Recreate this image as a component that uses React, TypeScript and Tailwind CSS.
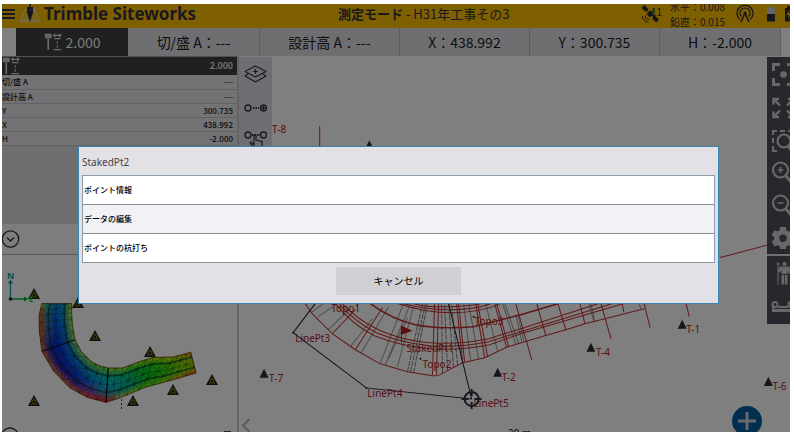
import React from "react";

type Pt = [number, number];
type RGB = [number, number, number];

const CJK = "font-['Noto_Sans_CJK_JP',sans-serif]";

/* ---------- Header icons ---------- */

function LogoIcon() {
  return (
    <svg viewBox="0 0 22 20" className="h-5 w-[22px] shrink-0" fill="none" aria-hidden="true">
      <path d="M7.500 4 1.500 17H20.500L14.500 4" stroke="#ddd8c8" strokeWidth="1.400" />
      <path d="M6.500 16 11 8l4.500 8" stroke="#ddd8c8" strokeWidth="1" />
      <path d="M11 0v3" stroke="#2a2a3c" strokeWidth="1.500" />
      <path d="M8 3h6v5.500L11 18 8 8.500z" fill="#2a2a3c" />
      <path d="M8 6h6" stroke="#5a5a78" strokeWidth="1" />
    </svg>
  );
}

function SatelliteIcon() {
  return (
    <svg viewBox="0 0 18 18" className="h-[18px] w-[18px] shrink-0" fill="none" aria-hidden="true">
      <g fill="#2c2a38">
        <rect x="1" y="1.500" width="6" height="4" transform="rotate(45 4 3.500)" />
        <rect x="6.500" y="6.500" width="5" height="5" transform="rotate(45 9 9)" />
        <rect x="11.500" y="12" width="6" height="4" transform="rotate(45 14.500 14)" />
      </g>
      <path d="m4 4 10 9" stroke="#2c2a38" strokeWidth="1" />
      <path d="m10.500 7.500 2-2" stroke="#2c2a38" strokeWidth="1.600" />
      <path d="M4 10.500a4 4 0 0 0 4 4M1.500 11a6 6 0 0 0 6 6" stroke="#2c2a38" strokeWidth="1" />
    </svg>
  );
}

function AntennaIcon() {
  return (
    <svg viewBox="0 0 18 18" className="h-[18px] w-[18px] shrink-0" fill="none" stroke="#2c2a38" aria-hidden="true">
      <path d="M4 14.500a8 8 0 1 1 10 0" strokeWidth="1.300" />
      <path d="M5.300 11.500a5 5 0 1 1 7.400 0" strokeWidth="1.300" />
      <path d="M5 17 9 8l4 9" strokeWidth="1.500" />
      <circle cx="9" cy="8.300" r="1.500" fill="#2c2a38" stroke="none" />
    </svg>
  );
}

function BatteryIcon() {
  return (
    <svg viewBox="0 0 10 18" className="h-[18px] w-[10px] shrink-0" aria-hidden="true">
      <path d="M3 1h4v2h2v6H1V3h2z" fill="#d0ccc8" />
      <path d="M1 9h8v7.500H1z" fill="#2c2a38" />
    </svg>
  );
}

function ChargeIcon() {
  return (
    <svg viewBox="0 0 10 18" className="h-[18px] w-[10px] shrink-0" aria-hidden="true">
      <path d="M3 1h4v2h2.500v13.500H1V3h2z" fill="#2c2a38" />
      <path d="M5.500 5 2.300 10h2.500L4 14l3.500-5.500H5z" fill="#ffc000" />
    </svg>
  );
}

function HeightIcon() {
  return (
    <svg viewBox="0 0 18 19" className="h-[18px] w-[18px] shrink-0" fill="none" stroke="#d8d8d8" aria-hidden="true">
      <path d="M1 1.500h6v3.500H1z" strokeWidth="1.200" />
      <path d="M1 3.300h6M4 5.500V18" strokeWidth="1.700" />
      <path d="M9.500 2.500h8M11.500 1 9.500 2.500l2 1.500M15.500 1l2 1.500-2 1.500M10 6h7M13.500 8.500v2.500M13.500 13v2.500M9.500 17.500h8" strokeWidth="1.200" />
    </svg>
  );
}

/* ---------- Terrain model in the overview map ---------- */

const OUTER: Pt[] = [
  [125, 47], [118, 80], [118, 130], [126, 190], [160, 248], [210, 300], [262, 328],
  [318, 343], [358, 330], [400, 313], [435, 298], [480, 286], [530, 272], [588, 255],
];
const INNER: Pt[] = [
  [215, 47], [215, 75], [217, 110], [225, 155], [243, 190], [275, 222], [300, 234],
  [325, 240], [368, 240], [415, 222], [460, 208], [520, 207], [545, 200], [572, 193],
];
const HEIGHTS: RGB[][] = [
  [[170, 230, 30], [10, 190, 190], [0, 120, 220], [0, 170, 200], [190, 235, 30]],
  [[240, 80, 20], [40, 150, 170], [0, 100, 225], [0, 150, 220], [180, 235, 30]],
  [[240, 70, 10], [50, 120, 170], [0, 60, 225], [0, 130, 230], [170, 230, 40]],
  [[220, 110, 40], [20, 30, 210], [0, 40, 225], [0, 110, 230], [140, 230, 60]],
  [[220, 120, 40], [20, 10, 200], [0, 60, 225], [0, 120, 220], [120, 230, 70]],
  [[225, 100, 50], [40, 20, 200], [0, 80, 230], [0, 150, 210], [120, 235, 50]],
  [[240, 60, 50], [100, 70, 200], [0, 130, 230], [0, 180, 190], [110, 235, 40]],
  [[255, 0, 0], [60, 160, 190], [0, 190, 210], [0, 200, 180], [150, 235, 30]],
  [[220, 190, 70], [0, 190, 180], [0, 190, 190], [0, 200, 130], [130, 235, 30]],
  [[150, 230, 40], [0, 200, 110], [0, 200, 90], [0, 210, 50], [140, 235, 10]],
  [[110, 230, 10], [10, 220, 20], [0, 210, 20], [20, 220, 10], [180, 230, 0]],
  [[150, 230, 10], [60, 220, 10], [50, 220, 10], [90, 225, 0], [190, 220, 0]],
  [[220, 150, 20], [130, 230, 0], [120, 225, 0], [150, 225, 0], [200, 200, 0]],
  [[255, 50, 20], [170, 225, 0], [150, 220, 0], [180, 220, 0], [230, 130, 0]],
];

const mix = (a: number, b: number, t: number) => a + (b - a) * t;

function along(line: Pt[], s: number): Pt {
  const i = Math.min(Math.floor(s), line.length - 2);
  return [mix(line[i][0], line[i + 1][0], s - i), mix(line[i][1], line[i + 1][1], s - i)];
}

function at(s: number, t: number): Pt {
  const o = along(OUTER, s);
  const n = along(INNER, s);
  return [mix(o[0], n[0], t) / 3, mix(o[1], n[1], t) / 3 + 287];
}

function shade(s: number, t: number): string {
  const i = Math.min(Math.floor(s), 12);
  const j = Math.min(Math.floor(t * 4), 3);
  const u = s - i;
  const v = t * 4 - j;
  const c = [0, 1, 2].map((k) =>
    Math.round(
      mix(mix(HEIGHTS[i][j][k], HEIGHTS[i][j + 1][k], v), mix(HEIGHTS[i + 1][j][k], HEIGHTS[i + 1][j + 1][k], v), u)
    )
  );
  return `rgb(${c.join(",")})`;
}

const pts = (list: Pt[]) => list.map((p) => `${p[0].toFixed(1)},${p[1].toFixed(1)}`).join(" ");

function Terrain() {
  const cells: React.ReactNode[] = [];
  const S = 52;
  const T = 12;
  for (let i = 0; i < S; i++) {
    for (let j = 0; j < T; j++) {
      const s0 = (i / S) * 13;
      const s1 = ((i + 1) / S) * 13;
      const color = shade((s0 + s1) / 2, (j + 0.5) / T);
      cells.push(
        <polygon
          key={`${i}-${j}`}
          points={pts([at(s0, j / T), at(s1, j / T), at(s1, (j + 1) / T), at(s0, (j + 1) / T)])}
          fill={color}
          stroke={color}
          strokeWidth="0.5"
        />
      );
    }
  }
  const long = (t: number) => pts(Array.from({ length: 53 }, (_, i) => at(i / 4, t)));
  const mesh: React.ReactNode[] = [];
  for (let i = 0; i <= 26; i++) {
    mesh.push(<polyline key={`c${i}`} points={pts([at(i / 2, 0), at(i / 2, 1)])} />);
    if (i < 26) {
      const a = i / 2;
      const b = (i + 1) / 2;
      mesh.push(
        <polyline key={`z${i}`} points={pts(i % 2 ? [at(a, 0), at(b, 0.3), at(a, 0.5), at(b, 0.75), at(a, 1)] : [at(b, 0), at(a, 0.3), at(b, 0.5), at(a, 0.75), at(b, 1)])} />
      );
    }
  }
  return (
    <g fill="none">
      {cells}
      <g stroke="#102018" strokeOpacity="0.6" strokeWidth="0.6">
        {mesh}
        <polyline points={long(0.5)} />
      </g>
      <g stroke="#003028" strokeOpacity="0.6" strokeWidth="2">
        <polyline points={long(0.28)} />
        <polyline points={long(0.77)} />
      </g>
      <g stroke="#101010" strokeWidth="1.2">
        <polyline points={pts([at(3, 0), at(3, 1)])} />
        <polyline points={pts([at(7, 0), at(7, 1)])} />
      </g>
      <g stroke="#503018" strokeWidth="0.7">
        <polyline points={long(0)} />
        <polyline points={long(1)} />
        <polyline points={pts([at(0, 0), at(0, 1)])} />
        <polyline points={pts([at(13, 0), at(13, 1)])} />
      </g>
    </g>
  );
}

const CONTROL_POINTS: Pt[] = [
  [34, 293], [78, 302], [95, 335], [150, 351], [212, 379], [173, 389], [133, 400], [34, 400],
];

function OverviewMap() {
  return (
    <svg viewBox="2 254 235 178" preserveAspectRatio="xMinYMin slice" className="absolute inset-0 size-full" aria-label="全体図">
      <Terrain />
      {CONTROL_POINTS.map(([x, y]) => (
        <g key={`${x}-${y}`}>
          <path d={`M${x} ${y - 6}l6 11h-12z`} fill="#1c1a20" />
          <circle cx={x} cy={y + 1} r="2" fill="none" stroke="#a89000" strokeWidth="1" />
          <path d={`M${x} ${y - 3}v1.500M${x - 3} ${y + 4}l1-1M${x + 3} ${y + 4}l-1-1`} stroke="#a89000" />
        </g>
      ))}
      <path d="M10.500 298v-17" stroke="#009898" strokeWidth="1.200" />
      <path d="M10.500 278.500l2.500 4h-5z" fill="#009898" />
      <path d="M10 298h15" stroke="#00b428" strokeWidth="1.400" />
      <path d="M24 295.500l4 2.500-4 2.500z" fill="#00b428" />
      <circle cx="10.500" cy="298" r="1.800" fill="#402020" />
      <text x="7" y="278" fill="#00a8a8" fontWeight="700" className="font-['Noto_Sans',sans-serif] text-[9px]">N</text>
      <text x="29" y="301" fill="#00b428" fontWeight="700" className="font-['Noto_Sans',sans-serif] text-[8px]">E</text>
      <path d="M121.500 398v10" stroke="#b02030" strokeDasharray="2 2" />
      <circle cx="10" cy="435.500" r="8.500" fill="none" stroke="#34323f" strokeWidth="1.300" />
      <text x="216" y="437" fill="#34323f" fontWeight="700" className="font-['Noto_Sans',sans-serif] text-[9px]">K</text>
      <path d="M224 430h7v2h-7z" fill="#4a4856" />
    </svg>
  );
}

/* ---------- Main plan map ---------- */

const RED_RADIALS = [
  "M332 334 355 310", "M355 350 382 308", "M432 375 434 304", "M436 375 438 304",
  "M462 363 456 304", "M464 362 458 304", "M484 358 475 304", "M487 357 477 304",
  "M506 348 494 304", "M508 347 496 304", "M515 304 531 360", "M536 304 545 336",
  "M557 304 565 330", "M579 304 584 324", "M600 304 610 339", "M621 304 623 313",
  "M643 304 649 328", "M685 304 688 317", "M319.500 127V147",
];
const GREY_RADIALS = [
  "M318 317 337 304", "M311 313 323 304", "M328 330 350 309", "M350 347 372 319", "M361 353 388 307",
  "M380 363 403 304", "M385 365 410 304", "M397 367 413 307", "M515 315 521 342", "M517 315 523 341",
  "M588 304 593 322", "M590 304 594 322", "M638 304 640 309", "M470 361 463 304", "M478 359 468 304",
  "M497 352 485 304", "M515 345 502 304", "M518 344 504 304", "M388 359 407 318",
];
const DARK_RADIALS = [
  "M407 372 422 304", "M410 372 425 304", "M413 373 427 304", "M442 373 441 304",
  "M447 370 444 304", "M453 368 448 304", "M457 365 451 304",
];

const LABELS: [number, number, string][] = [
  [272, 134, "T-8"], [331, 312, "Topo1"], [295, 342, "LinePt3"], [269, 382, "T-7"],
  [367, 397, "LinePt4"], [406, 352, "StakedPt1"], [422, 368, "Topo2"], [474, 325, "Topo3"],
  [501, 381, "T-2"], [473, 407, "LinePt5"], [595, 356, "T-4"], [685, 333, "T-1"], [771, 390, "T-6"],
];
const TRIANGLES: Pt[] = [[264, 374], [497, 373], [590, 348], [681, 325], [767, 382], [369, 146], [771, 135]];

function PlanMap() {
  return (
    <svg viewBox="239 57 551 375" preserveAspectRatio="xMinYMin slice" className="absolute inset-0 size-full" fill="none" aria-label="平面図">
      <g stroke="#989898" strokeWidth="1">
        {GREY_RADIALS.map((d) => <path key={d} d={d} />)}
      </g>
      <g stroke="#808080" strokeWidth="1" strokeDasharray="5 1">
        {DARK_RADIALS.map((d) => <path key={d} d={d} />)}
      </g>
      <g stroke="#c43030" strokeWidth="1">
        {RED_RADIALS.map((d) => <path key={d} d={d} />)}
        <path d="M305 304 312 314 332 334 355 350 380 364 407 372 432 376 437 376 462 363 484 358 507 347 514 345 544 336 565 330 584 324 604 319 643 309" />
        <path d="M342 304Q357 320 378 330 402 341 430 343 458 345 488 339L520 329 597 304" />
        <path d="M339 304Q354 322 376 333 401 343 429 346 458 348 488 342L520 332 611 304" />
        <path d="M335 304Q352 325 374 336 400 346 428 349 458 351 489 345L520 334 622 304" />
        <path d="M370 304Q392 320 415 325 440 330 473 327L520 315 557 304" strokeWidth="1.500" />
        <path d="M403 304Q427 310 450 310T490 304M398 304Q425 313 452 313T500 304M413 304Q430 308 450 307T480 304" />
        <path d="M719 258 768 245" />
      </g>
      <path d="M315 304 293 333 366 388 471 399 448 304" stroke="#202020" strokeWidth="1" />
      <path d="M401 326v17" stroke="#7a4a4a" />
      <path d="M401 326l11 5-11 4z" fill="#c01a1a" />
      {TRIANGLES.map(([x, y]) => (
        <path key={`${x}-${y}`} d={`M${x} ${y - 5}l4.500 9h-9z`} fill="#2e2c38" />
      ))}
      <g fill="#202020">
        <circle cx="293" cy="333" r="1" />
        <circle cx="366" cy="388" r="1" />
        <circle cx="420" cy="359" r="1" />
        <circle cx="473" cy="317" r="1" />
      </g>
      <g fill="#b01c1c" className="font-['Noto_Sans',sans-serif] text-[10px]">
        {LABELS.map(([x, y, label]) => <text key={label} x={x} y={y}>{label}</text>)}
      </g>
      <circle cx="471" cy="399" r="7" stroke="#2e3340" strokeWidth="2" />
      <path d="M471 389v7M471 402v7M461 399h7M474 399h7" stroke="#2e3340" strokeWidth="2" />
      <path d="M249.500 419l-6.500 6.500 6.500 6.500" stroke="#b4b4b4" strokeWidth="2" />
      <text x="507" y="437" fill="#202020" className="font-['Noto_Sans',sans-serif] text-[10px]">20 m</text>
    </svg>
  );
}

/* ---------- Tool bars ---------- */

function Tool({ label, height, children }: { label: string; height: string; children: React.ReactNode }) {
  return (
    <button type="button" aria-label={label} className={`flex w-full items-center ${height}`}>
      <svg viewBox="0 0 24 24" className="size-6 shrink-0" fill="none" aria-hidden="true">{children}</svg>
    </button>
  );
}

function SketchTools() {
  return (
    <div className="absolute top-px left-0 flex h-[120px] w-[33px] flex-col bg-[#dedee6] pl-1 text-[#34323f]">
      <Tool label="レイヤー" height="h-[34px]">
        <g stroke="currentColor" strokeWidth="1.200" strokeLinejoin="round">
          <path d="M12.500 4 23 9.500l-10.500 5.500L2 9.500z" />
          <path d="M5 12 2 14l10.500 6L23 14l-3-2M12.500 7v5M10 9.500h5" />
        </g>
      </Tool>
      <Tool label="点を追加" height="h-[34px]">
        <g stroke="currentColor" strokeWidth="1.400">
          <circle cx="5" cy="12" r="3" /><circle cx="20.500" cy="12" r="3" />
          <path d="M10 12h6" strokeDasharray="1.500 1" strokeWidth="2" /><path d="M20.500 10v4M18.500 12h4" />
        </g>
      </Tool>
      <Tool label="線を選択" height="h-6">
        <g stroke="currentColor" strokeWidth="1.400">
          <circle cx="5" cy="10" r="3" /><circle cx="20.500" cy="10" r="3" /><path d="M9 10h8" strokeDasharray="1.500 1" strokeWidth="2" />
          <path d="M10 22l-3-4 1-1 3 3v-9c0-1.500 2-1.500 2 0v4l6 1.500v6" strokeWidth="1.200" />
        </g>
      </Tool>
    </div>
  );
}

function ViewTools() {
  return (
    <div className="absolute top-px right-0 w-[23px] overflow-hidden text-[#d0d0d2]">
      <div className="flex h-[197px] flex-col bg-[#504e5a] pl-1">
        <Tool label="現在位置" height="h-[34px]">
          <path d="M2.500 9V2.500H9M16 2.500h6.500V9M2.500 16v6.500H9M22.500 16v6.500H16" stroke="currentColor" strokeWidth="3" />
          <circle cx="12.500" cy="12.500" r="3.300" fill="currentColor" />
        </Tool>
        <Tool label="全体表示" height="h-[34px]">
          <path d="M2.500 9.500V4h5.500M3 4.500l6 6M22.500 9.500V4H17M22 4.500l-6 6M2.500 16.500V22h5.500M3 21.500l6-6M22.500 16.500V22H17M22 21.500l-6-6" stroke="currentColor" strokeWidth="2.400" />
        </Tool>
        <Tool label="範囲拡大" height="h-[34px]">
          <path d="M2 6V2h4M9 2h5M17 2h4M2 9v5M2 17v5h4" stroke="currentColor" strokeWidth="2" />
          <circle cx="13" cy="12" r="6.500" stroke="currentColor" strokeWidth="2.200" />
          <path d="m17 17 5 6" stroke="currentColor" strokeWidth="3" />
        </Tool>
        <Tool label="拡大" height="h-[30px]">
          <circle cx="9.500" cy="10" r="7.500" stroke="currentColor" strokeWidth="2.200" />
          <path d="m15 16 6 7" stroke="currentColor" strokeWidth="3" />
          <path d="M9.500 7v6M6.500 10h6" stroke="currentColor" strokeWidth="1.600" />
        </Tool>
        <Tool label="縮小" height="h-[34px]">
          <circle cx="9.500" cy="11" r="7.500" stroke="currentColor" strokeWidth="2.200" />
          <path d="m15 17 6 7" stroke="currentColor" strokeWidth="3" />
          <path d="M6.500 11h6" stroke="currentColor" strokeWidth="1.600" />
        </Tool>
        <Tool label="設定" height="h-[34px]">
          <path
            d="M9.200 1h5.600l.6 3.300 1.900 1.100 3.200-1.200 2.800 4.900-2.600 2.100v2.200l2.600 2.200-2.800 4.800-3.200-1.200-1.900 1.100-.6 3.300H9.200l-.6-3.300-1.900-1.100-3.200 1.200L.7 15.600l2.600-2.200v-2.200L.7 9.100l2.800-4.900 3.200 1.200 1.900-1.100zM12 8.600a3.700 3.700 0 1 0 0 7.400 3.700 3.700 0 0 0 0-7.400z"
            transform="translate(0 1)"
            fill="currentColor" fillRule="evenodd"
          />
        </Tool>
      </div>
      <div className="h-0.5 bg-[#dedee2]" />
      <div className="flex h-[68px] flex-col bg-[#504e5a] pl-1">
        <Tool label="測量者" height="h-[34px]">
          <circle cx="13.500" cy="3" r="2" fill="currentColor" />
          <path d="M8.500 5.500h10l.8 7h-2l-.8-3V13h-6V9.500l-2 2.500-1.500-2zM10.500 14h2.700v9.500h-2.700zM14 14h2.500v9.500H14z" fill="currentColor" />
          <path d="M7 1v23M5.500 3h3" stroke="currentColor" strokeWidth="1" />
        </Tool>
        <Tool label="計測" height="h-[34px]">
          <path d="M2 10v6h20v-4" stroke="currentColor" strokeWidth="2" />
          <path d="M7 11h10v2H7zM1 14h22v3H1z" fill="currentColor" />
          <circle cx="4" cy="9.500" r="2.500" stroke="currentColor" strokeWidth="2" />
          <circle cx="20" cy="9.500" r="2.500" stroke="currentColor" strokeWidth="2" />
        </Tool>
      </div>
    </div>
  );
}

/* ---------- Data ---------- */

const CELLS: { text: string; grow: string }[] = [
  { text: "切/盛 A：---", grow: "grow-[132]" },
  { text: "設計高 A：---", grow: "grow-[140]" },
  { text: "X：438.992", grow: "grow-[130]" },
  { text: "Y：300.735", grow: "grow-[130]" },
  { text: "H：-2.000", grow: "grow-[121]" },
];

const ROWS: [string, string][] = [
  ["切/盛 A", "---"], ["設計高 A", "---"], ["Y", "300.735"], ["X", "438.992"], ["H", "-2.000"],
];

const ACTIONS = ["ポイント情報", "データの編集", "ポイントの杭打ち"];

export default function App() {
  return (
    <div className={`h-screen overflow-hidden bg-white pt-1 pr-1 pl-0.5 text-[#18181c] ${CJK}`}>
      <div className="relative flex h-full flex-col overflow-hidden bg-white">
        <header className="flex h-6 shrink-0 items-center overflow-hidden bg-[#ffc000]">
          <div className="flex w-[336px] shrink-0 items-center pb-1">
            <button type="button" aria-label="メニュー" className="flex w-[13px] flex-col gap-[2px]">
              <span className="h-[2px] bg-[#34323f]" />
              <span className="h-[2px] bg-[#34323f]" />
              <span className="h-[2px] bg-[#34323f]" />
            </button>
            <span className="ml-1 flex"><LogoIcon /></span>
            <span className="ml-[3px] font-['Noto_Sans',sans-serif] text-[17px] leading-6 font-bold whitespace-nowrap text-[#34323f]">
              Trimble Siteworks
            </span>
          </div>
          <h1 className="flex-1 pb-1 text-[13px] leading-5 whitespace-nowrap text-[#34323f]">
            <b>測定モード</b> - H31年工事その3
          </h1>
          <div className="flex shrink-0 items-center pb-1 text-[#34323f]">
            <SatelliteIcon />
            <span className="-ml-2 h-5 text-[10px] leading-4">11</span>
            <div className="ml-2 w-[58px] text-[10px] leading-[15px] whitespace-nowrap">
              <p>水平：0.008</p>
              <p>鉛直：0.015</p>
            </div>
            <span className="ml-2 flex"><AntennaIcon /></span>
            <span className="ml-3 flex"><BatteryIcon /></span>
            <span className="-mr-1 ml-2 flex"><ChargeIcon /></span>
          </div>
        </header>

        <div className="flex h-7 shrink-0 text-[14px] leading-7 whitespace-nowrap">
          <div className="w-[14px] shrink-0" />
          <div className="flex w-28 shrink-0 items-center justify-center gap-1 bg-[#404040] text-[#f4f4f4]">
            <HeightIcon />
            2.000
          </div>
          {CELLS.map((c) => (
            <div key={c.text} className={`basis-0 border-r border-[#bcbcc4] bg-[#dedee4] text-center ${c.grow}`}>
              {c.text}
            </div>
          ))}
          <div className="w-[9px] shrink-0" />
        </div>

        <div className="flex min-h-0 flex-1">
          <aside className="flex w-[237px] shrink-0 flex-col border-r-2 border-[#c8c8cc]">
            <div className="flex h-[19px] shrink-0 items-center justify-between border-t border-[#a0a0a4] bg-[#404040] pr-1 text-[9px] leading-4 font-medium text-[#f4f4f4]">
              <HeightIcon />
              2.000
            </div>
            <table className="w-full shrink-0 border-collapse text-[8px] leading-[13px] font-medium">
              <tbody>
                {ROWS.map(([name, value]) => (
                  <tr key={name} className="h-[14px] border-b border-[#c4c4ca] bg-[#e6e6ea]">
                    <th scope="row" className="p-0 text-left font-medium">{name}</th>
                    <td className="p-0 pr-1 text-right">{value}</td>
                  </tr>
                ))}
              </tbody>
            </table>
            <div className="h-[78px] shrink-0 bg-[#dedee2]" />
            <div className="flex h-[31px] shrink-0 items-center border-b border-[#b0b0b4] bg-[#fafafa]">
              <button type="button" aria-label="折りたたむ" className="flex">
                <svg viewBox="0 0 18 18" className="size-[18px]" fill="none" stroke="#34323f" strokeWidth="1.300" aria-hidden="true">
                  <circle cx="8.500" cy="9" r="8.200" />
                  <path d="m5 7.500 3.500 3.500L12 7.500" />
                </svg>
              </button>
            </div>
            <div className="relative min-h-0 flex-1 overflow-hidden"><OverviewMap /></div>
          </aside>

          <main className="relative min-w-0 flex-1 overflow-hidden">
            <PlanMap />
            <SketchTools />
            <ViewTools />
            <button
              type="button"
              aria-label="追加"
              className="absolute right-7 -bottom-1 flex size-[30px] items-center justify-center rounded-full bg-[#005e9e]"
            >
              <svg viewBox="0 0 18 18" className="size-[18px]" aria-hidden="true">
                <path d="M9 0v18M0 9h18" stroke="#d4d4d4" strokeWidth="3" />
              </svg>
            </button>
          </main>
        </div>

        <div className="absolute inset-0 flex items-center bg-black/50 pt-[13px] pr-[71px] pl-[76px]">
          <div role="dialog" aria-modal="true" aria-labelledby="point-name" className="flex-1 border border-[#3c82ae] bg-[#e2e1e6] px-[3px] pb-2">
            <h2 id="point-name" className="pt-[9px] pb-[7px] font-['Noto_Sans',sans-serif] text-[10px] leading-3 text-[#44434e]">StakedPt2</h2>
            <ul className="border-x border-t border-[#8a9cac]">
              {ACTIONS.map((a) => (
                <li key={a} className="border-b border-[#8c8c94] odd:bg-white even:bg-[#f2f1f6]">
                  <button type="button" className="block h-7 w-full pl-px text-left text-[8px] leading-7 font-medium text-black">{a}</button>
                </li>
              ))}
            </ul>
            <button type="button" className="mx-auto mt-1 block h-7 w-[125px] bg-[#cfcfd4] text-[10px] leading-7 text-black">
              キャンセル
            </button>
          </div>
        </div>
      </div>
    </div>
  );
}
